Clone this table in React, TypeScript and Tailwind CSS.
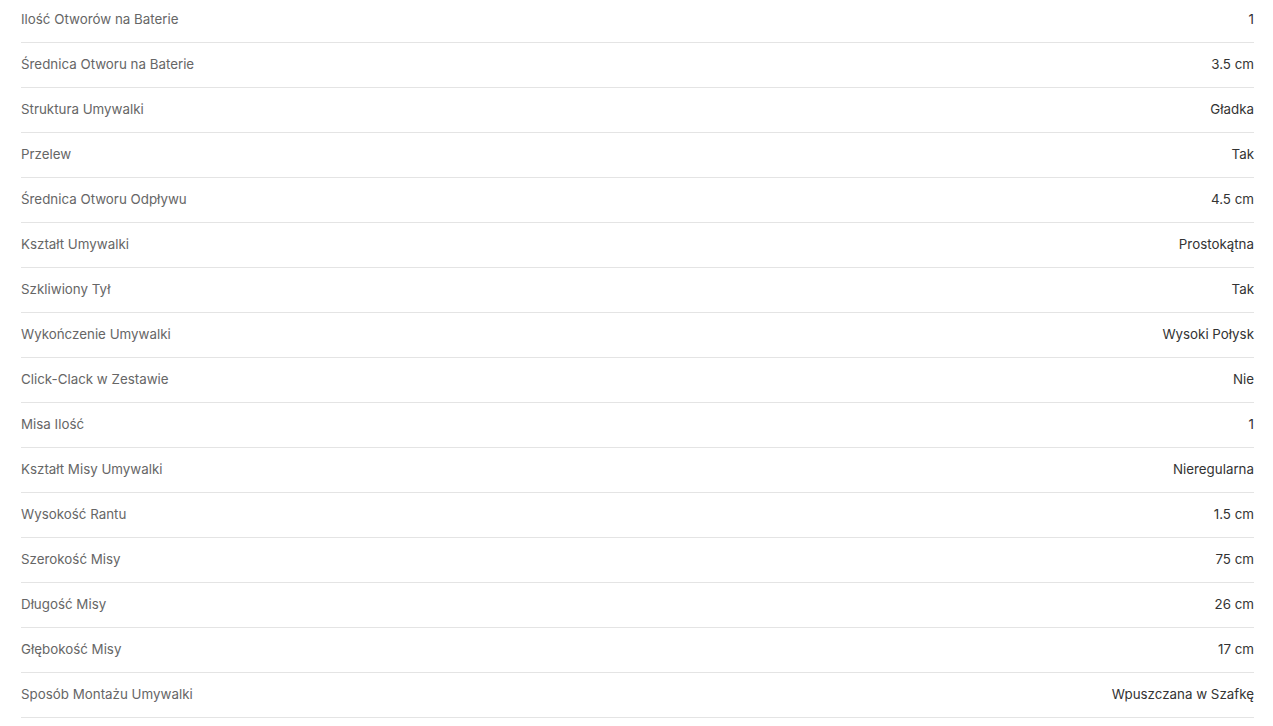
const rows: [string, string][] = [
  ['Ilość Otworów na Baterie', '1'],
  ['Średnica Otworu na Baterie', '3.5 cm'],
  ['Struktura Umywalki', 'Gładka'],
  ['Przelew', 'Tak'],
  ['Średnica Otworu Odpływu', '4.5 cm'],
  ['Kształt Umywalki', 'Prostokątna'],
  ['Szkliwiony Tył', 'Tak'],
  ['Wykończenie Umywalki', 'Wysoki Połysk'],
  ['Click-Clack w Zestawie', 'Nie'],
  ['Misa Ilość', '1'],
  ['Kształt Misy Umywalki', 'Nieregularna'],
  ['Wysokość Rantu', '1.5 cm'],
  ['Szerokość Misy', '75 cm'],
  ['Długość Misy', '26 cm'],
  ['Głębokość Misy', '17 cm'],
  ['Sposób Montażu Umywalki', 'Wpuszczana w Szafkę'],
]

export default function App() {
  return (
    <div className="bg-white min-h-screen pl-[21px] pr-[19px] font-['Inter',sans-serif] text-[13.35px]">
      <div className="-mt-[2px]">
        {rows.map(([label, value]) => (
          <div
            key={label}
            className="flex items-center justify-between h-[45px] pb-[2px] border-b border-[#e4e4e4]"
          >
            <span className="text-[#666666]">{label}</span>
            <span className="text-[#333333]">{value}</span>
          </div>
        ))}
      </div>
    </div>
  )
}
